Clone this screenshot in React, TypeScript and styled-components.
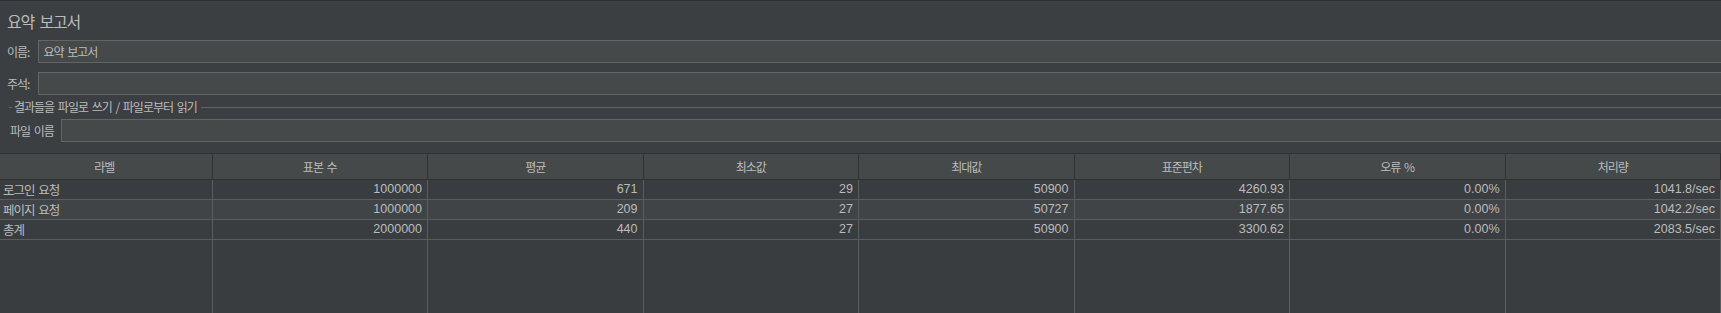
import React from "react";
import styled, { createGlobalStyle } from "styled-components";

const KO = `"Noto Sans CJK KR", "Liberation Sans", sans-serif`;
const NUM = `"Liberation Sans", "Noto Sans CJK KR", sans-serif`;

const GlobalStyle = createGlobalStyle`
  html, body {
    margin: 0;
    padding: 0;
    background: #3c3f41;
  }
`;

const columns = ["라벨", "표본 수", "평균", "최소값", "최대값", "표준편차", "오류 %", "처리량"];

const rows = [
  ["로그인 요청", "1000000", "671", "29", "50900", "4260.93", "0.00%", "1041.8/sec"],
  ["페이지 요청", "1000000", "209", "27", "50727", "1877.65", "0.00%", "1042.2/sec"],
  ["총계", "2000000", "440", "27", "50900", "3300.62", "0.00%", "2083.5/sec"],
];

const App = () => {
  return (
    <>
      <GlobalStyle />
      <Page>
        <Title>요약 보고서</Title>
        <Form>
          <FieldRow>
            <Label>이름:</Label>
            <Field>요약 보고서</Field>
          </FieldRow>
          <FieldRow $top={9}>
            <Label>주석:</Label>
            <Field />
          </FieldRow>
          <Group>
            <GroupTitle>
              <GroupLine $short />
              <GroupText>결과들을 파일로 쓰기 / 파일로부터 읽기</GroupText>
              <GroupLine />
            </GroupTitle>
            <FileRow>
              <Label>파일 이름</Label>
              <Field />
            </FileRow>
          </Group>
        </Form>
        <Table>
          <HeaderRow>
            {columns.map((c) => (
              <HeaderCell key={c}>{c}</HeaderCell>
            ))}
          </HeaderRow>
          {rows.map((r, i) => (
            <BodyRow key={r[0]} $alt={i % 2 === 1}>
              {r.map((v, j) => (
                <Cell key={j} $numeric={j > 0}>
                  {v}
                </Cell>
              ))}
            </BodyRow>
          ))}
          <Filler>
            {columns.map((c) => (
              <FillerCell key={c} />
            ))}
          </Filler>
        </Table>
      </Page>
    </>
  );
};

export default App;

const Page = styled.div`
  height: 100vh;
  display: flex;
  flex-direction: column;
  background: #3c3f41;
  border-top: 1px solid #2e3032;
  box-sizing: border-box;
  overflow: hidden;
  color: #bbbbbb;
`;

const Title = styled.h1`
  margin: 0;
  padding: 0 7px;
  height: 39px;
  line-height: 40px;
  font-family: ${KO};
  font-size: 16px;
  font-weight: 400;
  letter-spacing: -1.2px;
  word-spacing: 3px;
  color: #bbbbbb;
`;

const Form = styled.div`
  display: flex;
  flex-direction: column;
  padding-left: 7px;
  margin-right: -10px;
`;

const FieldRow = styled.div<{ $top?: number }>`
  display: flex;
  align-items: center;
  gap: 9px;
  margin-top: ${(p) => p.$top ?? 0}px;
`;

const Label = styled.span`
  font-family: ${KO};
  font-size: 12px;
  letter-spacing: -1px;
  word-spacing: 2px;
  line-height: 23px;
  color: #bbbbbb;
  white-space: nowrap;
`;

const Field = styled.div`
  flex: 1;
  height: 23px;
  box-sizing: border-box;
  border: 1px solid #646464;
  background: #45494a;
  padding-left: 4px;
  font-family: ${KO};
  font-size: 12px;
  letter-spacing: -1px;
  word-spacing: 2px;
  line-height: 21px;
  color: #bbbbbb;
  white-space: nowrap;
`;

const Group = styled.div`
  display: flex;
  flex-direction: column;
  margin-top: 5px;
  padding-left: 2px;
`;

const GroupTitle = styled.div`
  display: flex;
  align-items: center;
  height: 14px;
  gap: 2px;
`;

const GroupLine = styled.div<{ $short?: boolean }>`
  flex: ${(p) => (p.$short ? "0 0 3px" : "1")};
  height: 1px;
  background: #646464;
  margin-left: ${(p) => (p.$short ? 0 : 2)}px;
`;

const GroupText = styled.span`
  font-family: ${KO};
  font-size: 12px;
  letter-spacing: -1px;
  word-spacing: 2px;
  line-height: 14px;
  color: #bbbbbb;
  white-space: nowrap;
`;

const FileRow = styled(FieldRow)`
  margin-top: 5px;
  padding-left: 1px;
  gap: 7px;
`;

const Table = styled.div`
  flex: 1;
  display: flex;
  flex-direction: column;
  margin-top: 11px;
  margin-left: -3px;
  width: calc(100% + 3px);
`;

const HeaderRow = styled.div`
  display: grid;
  grid-template-columns: repeat(8, 1fr);
  height: 27px;
  box-sizing: border-box;
  background: #45494a;
  border-top: 1px solid #2f3133;
  border-bottom: 1px solid #2f3133;
`;

const HeaderCell = styled.div`
  border-right: 1px solid #2f3133;
  text-align: center;
  font-family: ${KO};
  font-size: 12px;
  letter-spacing: -1px;
  word-spacing: 2px;
  line-height: 26px;
  color: #bbbbbb;
  white-space: nowrap;
`;

const BodyRow = styled.div<{ $alt: boolean }>`
  display: grid;
  grid-template-columns: repeat(8, 1fr);
  height: 20px;
  background: ${(p) => (p.$alt ? "#414446" : "#3a3d3f")};
`;

const Cell = styled.div<{ $numeric: boolean }>`
  border-right: 1px solid #5a5d60;
  border-bottom: 1px solid #5a5d60;
  padding: ${(p) => (p.$numeric ? "0 5px 0 3px" : "0 3px 0 6px")};
  text-align: ${(p) => (p.$numeric ? "right" : "left")};
  font-family: ${(p) => (p.$numeric ? NUM : KO)};
  font-size: 12.5px;
  letter-spacing: ${(p) => (p.$numeric ? "0" : "-1px")};
  word-spacing: ${(p) => (p.$numeric ? "0" : "2px")};
  line-height: 19px;
  color: #bbbbbb;
  white-space: nowrap;
  overflow: hidden;
`;

const Filler = styled.div`
  flex: 1;
  display: grid;
  grid-template-columns: repeat(8, 1fr);
  background: #3a3d3f;
`;

const FillerCell = styled.div`
  border-right: 1px solid #5a5d60;
`;
